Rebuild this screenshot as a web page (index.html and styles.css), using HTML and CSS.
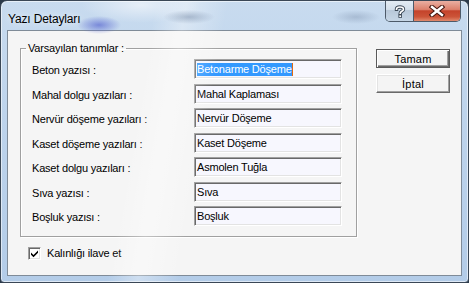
FILE: index.html
```html
<!DOCTYPE html>
<html lang="tr">
<head>
<meta charset="utf-8">
<title>Yazı Detayları</title>
<link rel="stylesheet" href="styles.css">
</head>
<body>
<div class="window">
  <div class="glass"></div>
  <div class="titlebar">
    <span class="title">Yazı Detayları</span>
  </div>
  <div class="caption-btns">
    <div class="cap-help">
      <svg width="12" height="13" viewBox="0 0 12 13"><path d="M2.5 4.2 C2.5 1.5 9.5 1.2 9.5 4.2 C9.5 6.3 6.2 6.2 6.2 8.3" fill="none" stroke="#3d4a58" stroke-width="3.4" stroke-linecap="square"/><path d="M2.5 4.2 C2.5 1.5 9.5 1.2 9.5 4.2 C9.5 6.3 6.2 6.2 6.2 8.3" fill="none" stroke="#fff" stroke-width="1.6" stroke-linecap="square"/><rect x="4.4" y="9.6" width="3.6" height="3.2" fill="#3d4a58"/><rect x="5.3" y="10.4" width="1.8" height="1.6" fill="#fff"/></svg>
    </div>
    <div class="cap-close">
      <svg width="16" height="12" viewBox="0 0 16 12"><path d="M3 2 L13 10 M13 2 L3 10" stroke="#4a1a12" stroke-width="4.6" stroke-linecap="square"/><path d="M3 2 L13 10 M13 2 L3 10" stroke="#fff" stroke-width="2.4" stroke-linecap="square"/></svg>
    </div>
  </div>
  <div class="client">
    <div class="main">
      <fieldset class="group">
        <legend>Varsayılan tanımlar :</legend>
        <div class="rows">
          <span class="lbl">Beton yazısı :</span>
          <div class="field"><span class="sel">Betonarme Döşeme</span></div>
          <span class="lbl">Mahal dolgu yazıları :</span>
          <div class="field">Mahal Kaplaması</div>
          <span class="lbl">Nervür döşeme yazıları :</span>
          <div class="field">Nervür Döşeme</div>
          <span class="lbl">Kaset döşeme yazıları :</span>
          <div class="field">Kaset Döşeme</div>
          <span class="lbl">Kaset dolgu yazıları :</span>
          <div class="field">Asmolen Tuğla</div>
          <span class="lbl">Sıva yazısı :</span>
          <div class="field">Sıva</div>
          <span class="lbl">Boşluk yazısı :</span>
          <div class="field">Boşluk</div>
        </div>
      </fieldset>
      <div class="check">
        <span class="box"><svg width="9" height="9" viewBox="0 0 9 9"><path d="M1 3.5 L3.5 6 L8 1.5 L8 3.8 L3.5 8.2 L1 5.7 Z" fill="#000"/></svg></span>
        <span>Kalınlığı ilave et</span>
      </div>
    </div>
    <div class="buttons">
      <div class="btn default">Tamam</div>
      <div class="btn">İptal</div>
    </div>
  </div>
</div>
</body>
</html>
```

FILE: styles.css
```css
html, body {
  margin: 0;
  padding: 0;
  background: #2b3a4a;
}

.window {
  position: relative;
  box-sizing: border-box;
  width: 469px;
  height: 283px;
  border: 1px solid #3a4756;
  border-radius: 7px 7px 4px 4px;
  padding: 29px 6px 6px 6px;
  display: flex;
  flex-direction: column;
  overflow: hidden;
  background:
    linear-gradient(to bottom, #c8dbef 0%, #bed4ec 40%, #b3cce8 100%);
  box-shadow: inset 0 0 0 1px rgba(255,255,255,0.55);
}

.glass {
  position: absolute;
  inset: 0;
  pointer-events: none;
  background:
    radial-gradient(ellipse 22px 9px at 98px 24px, rgba(95,110,210,0.75), rgba(95,110,210,0) 100%),
    radial-gradient(ellipse 26px 7px at 188px 16px, rgba(110,130,160,0.45), rgba(110,130,160,0) 100%),
    radial-gradient(ellipse 24px 7px at 355px 16px, rgba(110,130,160,0.35), rgba(110,130,160,0) 100%),
    radial-gradient(ellipse 60px 18px at 140px 4px, rgba(255,255,255,0.55), rgba(255,255,255,0) 100%),
    linear-gradient(100deg, rgba(255,255,255,0) 30%, rgba(255,255,255,0.35) 36%, rgba(255,255,255,0) 44%);
}

.titlebar {
  position: absolute;
  left: 0;
  top: 0;
  height: 29px;
  padding: 8px 0 0 7px;
  box-sizing: border-box;
}

.title {
  font-family: "Liberation Sans", Arial, sans-serif;
  font-size: 12px;
  line-height: 14px;
  letter-spacing: -0.15px;
  color: #000;
  text-shadow: 0 0 6px rgba(255,255,255,0.9);
}

.caption-btns {
  position: absolute;
  top: -1px;
  right: 7px;
  display: flex;
  height: 21px;
  border: 1px solid #4d5a69;
  border-top: none;
  border-radius: 0 0 5px 5px;
  overflow: hidden;
}

.cap-help {
  width: 28px;
  display: flex;
  align-items: center;
  justify-content: center;
  padding-top: 1px;
  box-sizing: border-box;
  border-right: 1px solid #4d5a69;
  background: linear-gradient(to bottom, #e5edf5 0%, #d3dfeb 45%, #b8c8d9 50%, #c6d6e6 100%);
}

.cap-close {
  width: 46px;
  display: flex;
  align-items: center;
  justify-content: center;
  padding-top: 1px;
  box-sizing: border-box;
  background: linear-gradient(to bottom, #ebb4a8 0%, #dc806c 45%, #c4432b 52%, #cc5438 80%, #e08a6e 100%);
}

.client {
  flex: 1;
  display: flex;
  background: #f5f5f5;
  border: 1px solid #7f8b98;
  font-family: "Liberation Sans", Arial, sans-serif;
  font-size: 11px;
  letter-spacing: -0.2px;
  color: #000;
}

.main {
  display: flex;
  flex-direction: column;
}

.group {
  box-sizing: border-box;
  margin: 11px 0 0 12px;
  width: 337px;
  height: 195px;
  padding: 4px 0 0 11px;
  border: 1px solid #a0a0a0;
  box-shadow: 1px 1px 0 #fff, inset 1px 1px 0 #fff;
}

.group legend {
  padding: 0 2px;
  margin-left: -6px;
  line-height: 13px;
  height: 13px;
}

.rows {
  display: grid;
  grid-template-columns: 162px 148px;
  grid-auto-rows: 20px;
  row-gap: 4.5px;
}

.lbl {
  padding-top: 5px;
  line-height: 13px;
  white-space: nowrap;
}

.field {
  box-sizing: border-box;
  height: 20px;
  padding: 2px 2px 0 2px;
  line-height: 14px;
  background: #f7f7fe;
  border: 1px solid;
  border-color: #a0a0a0 #ffffff #ffffff #a0a0a0;
  box-shadow: inset 1px 1px 0 #696969, inset -1px -1px 0 #e3e3e3;
  white-space: nowrap;
  overflow: hidden;
}

.sel {
  display: inline-block;
  line-height: 13px;
  background: #3399ff;
  color: #fff;
  border-right: 1px solid #e06a10;
}

.check {
  display: flex;
  align-items: center;
  gap: 6px;
  margin: 10px 0 0 20px;
  line-height: 13px;
}

.box {
  box-sizing: border-box;
  width: 13px;
  height: 13px;
  background: #fff;
  border: 1px solid;
  border-color: #a0a0a0 #fff #fff #a0a0a0;
  box-shadow: inset 1px 1px 0 #696969, inset -1px -1px 0 #e3e3e3;
  display: flex;
  align-items: center;
  justify-content: center;
}

.buttons {
  display: flex;
  flex-direction: column;
  gap: 6px;
  margin: 18px 0 0 19px;
}

.btn {
  box-sizing: border-box;
  width: 74px;
  height: 19px;
  display: flex;
  align-items: center;
  justify-content: center;
  background: #f4f4f4;
  border: 1px solid;
  border-color: #fff #696969 #696969 #fff;
  box-shadow: inset -1px -1px 0 #a0a0a0, inset 1px 1px 0 #e3e3e3;
  letter-spacing: 0.2px;
}

.btn.default {
  border: 1px solid #5a5a5a;
  box-shadow: inset 1px 1px 0 #fff, inset -1px -1px 0 #696969, inset -2px -2px 0 #a0a0a0;
}
```
